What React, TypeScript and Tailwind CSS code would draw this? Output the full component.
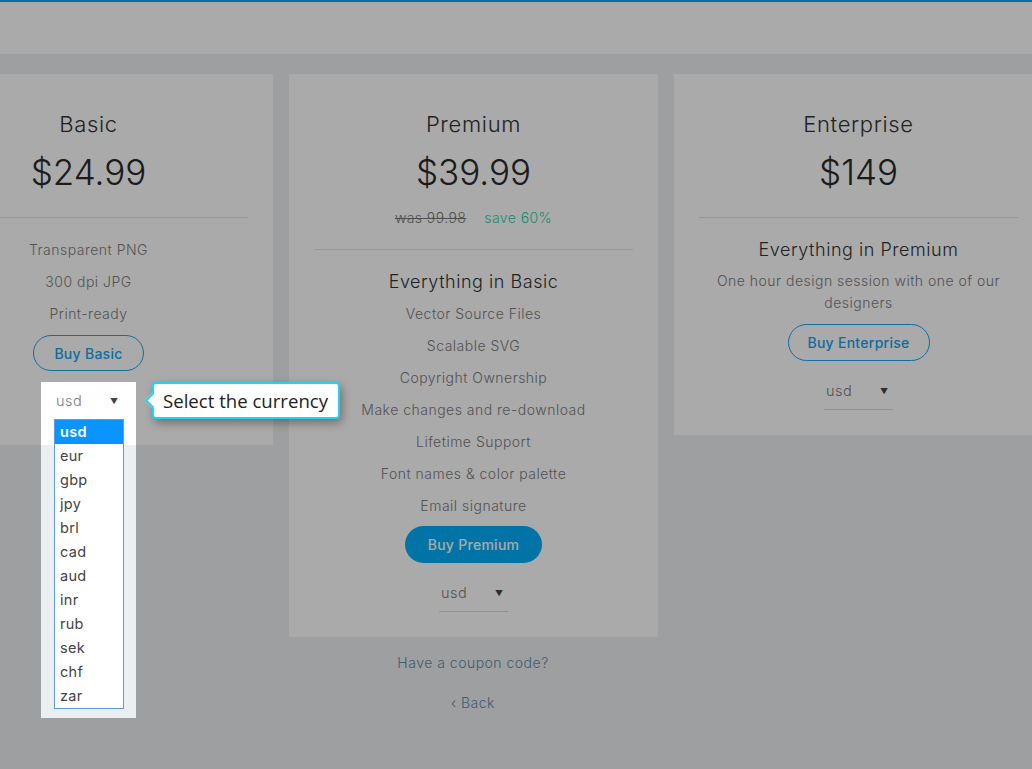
import { useState } from 'react';

// pricing page behind a product-tour overlay, currency select highlighted

const font = "font-['Inter','Noto_Sans',sans-serif]";

const currencies = ['usd', 'eur', 'gbp', 'jpy', 'brl', 'cad', 'aud', 'inr', 'rub', 'sek', 'chf', 'zar'];

const CurrencySelect = ({ underline = true }: { underline?: boolean }) => (
  <div className={`mx-auto flex w-[69px] items-center justify-between pl-[2px] pr-[5px] h-[37px] ${underline ? 'border-b border-[#dcdcdc]' : ''}`}>
    <span className="text-[14.5px] font-light tracking-[0.03em] text-[#7a7a7a]">usd</span>
    <span className="text-[8px] text-[#444]">▼</span>
  </div>
);

const Card = ({ children, className = '' }: { children: React.ReactNode; className?: string }) => (
  <div className={`w-[369px] shrink-0 bg-white text-center ${className}`}>{children}</div>
);

const Feature = ({ text }: { text: string }) => (
  <p className="h-[32px] leading-[32px] text-[14px] font-light tracking-[0.035em] text-[#7d7d7d]">{text}</p>
);

export default function App() {
  const [selected] = useState('usd');

  return (
    <div className={`relative h-[769px] w-full overflow-hidden bg-[#eceff2] ${font}`}>
      {/* header */}
      <div className="h-[54px] border-t-2 border-[#16a6f2] bg-white" />

      {/* plans */}
      <div className="mt-[20px] ml-[-96px] flex items-start gap-4">
        <Card className="h-[371px] px-[25px]">
          <h3 className="pt-[37px] text-[22px] leading-[26px] font-light tracking-[0.03em] text-[#333]">Basic</h3>
          <p className="mt-[12px] text-[35px] leading-[46px] font-light text-[#2a2a2a]">$24.99</p>
          <div className="mt-[22px] border-t border-[#e3e3e3]" />
          <div className="mt-[16px]">
            <Feature text="Transparent PNG" />
            <Feature text="300 dpi JPG" />
            <Feature text="Print-ready" />
          </div>
          <button className="mt-[5px] h-[36px] w-[111px] rounded-full border-[1.5px] border-[#17a6f4] text-[14px] font-medium tracking-[0.02em] text-[#15a3f0]">
            Buy Basic
          </button>
        </Card>

        <Card className="h-[563px] px-[25px]">
          <h3 className="pt-[37px] text-[22px] leading-[26px] font-light tracking-[0.03em] text-[#333]">Premium</h3>
          <p className="mt-[12px] text-[35px] leading-[46px] font-light text-[#2a2a2a]">$39.99</p>
          <p className="mt-[12px] text-[14px] font-light tracking-[0.03em]">
            <span className="text-[#777] line-through">was 99.98</span>
            <span className="ml-[18px] text-[#25d4a4]">save 60%</span>
          </p>
          <div className="mt-[21px] border-t border-[#e3e3e3]" />
          <h4 className="mt-[17px] text-[18px] leading-[30px] font-light tracking-[0.03em] text-[#333]">Everything in Basic</h4>
          <div className="mt-[1px]">
            <Feature text="Vector Source Files" />
            <Feature text="Scalable SVG" />
            <Feature text="Copyright Ownership" />
            <Feature text="Make changes and re-download" />
            <Feature text="Lifetime Support" />
            <Feature text="Font names & color palette" />
            <Feature text="Email signature" />
          </div>
          <button className="mt-[4px] h-[37px] w-[137px] rounded-full bg-[#00aef9] text-[14px] font-medium tracking-[0.02em] text-white">
            Buy Premium
          </button>
          <div className="mt-[12px]">
            <CurrencySelect />
          </div>
        </Card>

        <Card className="h-[361px] px-[25px]">
          <h3 className="pt-[37px] text-[22px] leading-[26px] font-light tracking-[0.03em] text-[#333]">Enterprise</h3>
          <p className="mt-[12px] text-[35px] leading-[46px] font-light text-[#2a2a2a]">$149</p>
          <div className="mt-[22px] border-t border-[#e3e3e3]" />
          <h4 className="mt-[17px] text-[18px] leading-[30px] font-light tracking-[0.03em] text-[#333]">Everything in Premium</h4>
          <p className="mt-[5px] px-[10px] text-[14px] leading-[22px] font-light tracking-[0.035em] text-[#7d7d7d]">
            One hour design session with one of our designers
          </p>
          <button className="mt-[10px] h-[37px] w-[142px] rounded-full border-[1.5px] border-[#17a6f4] text-[14px] font-medium tracking-[0.02em] text-[#15a3f0]">
            Buy Enterprise
          </button>
          <div className="mt-[12px]">
            <CurrencySelect />
          </div>
        </Card>
      </div>

      <div className="ml-[-86px] text-center">
        <p className="mt-[15px] text-[14px] font-light tracking-[0.035em] text-[#5f8aab]">Have a coupon code?</p>
        <p className="mt-[19px] text-[14px] font-light tracking-[0.035em] text-[#5f8aab]">‹ Back</p>
      </div>

      {/* tour overlay */}
      <div className="absolute inset-0 bg-black/[0.335]" />

      {/* highlighted element */}
      <div className="absolute left-[41px] top-[382px] w-[95px]">
        <div className="h-[63px] bg-white" />
        <div className="h-[273px] bg-[#eceff2]" />
        <div className="absolute left-[13px] top-0">
          <CurrencySelect underline={false} />
        </div>
        <ul className="absolute left-[13px] top-[37px] w-[70px] border border-[#5a9de2] border-t-[#a77bd6] bg-white">
          {currencies.map((c) => (
            <li
              key={c}
              className={`h-[24px] pl-[5px] text-[14.5px] leading-[24px] tracking-[0.02em] ${c === selected ? 'bg-[#0a94ff] font-semibold text-white' : 'text-[#444]'}`}
            >
              {c}
            </li>
          ))}
        </ul>
      </div>

      {/* tooltip */}
      <div className="absolute left-[152px] top-[382px] flex h-[37px] items-center rounded-[4px] border-2 border-[#1fd3f5] bg-white pl-[9px] pr-[10px] shadow-[2px_4px_10px_rgba(0,0,0,0.35)]">
        <span className="absolute left-[-7px] top-[11px] h-[11px] w-[11px] rotate-45 border-b-2 border-l-2 border-[#1fd3f5] bg-white" />
        <span className="relative font-['Open_Sans',sans-serif] text-[18.6px] text-[#222]">Select the currency</span>
      </div>
    </div>
  );
}
